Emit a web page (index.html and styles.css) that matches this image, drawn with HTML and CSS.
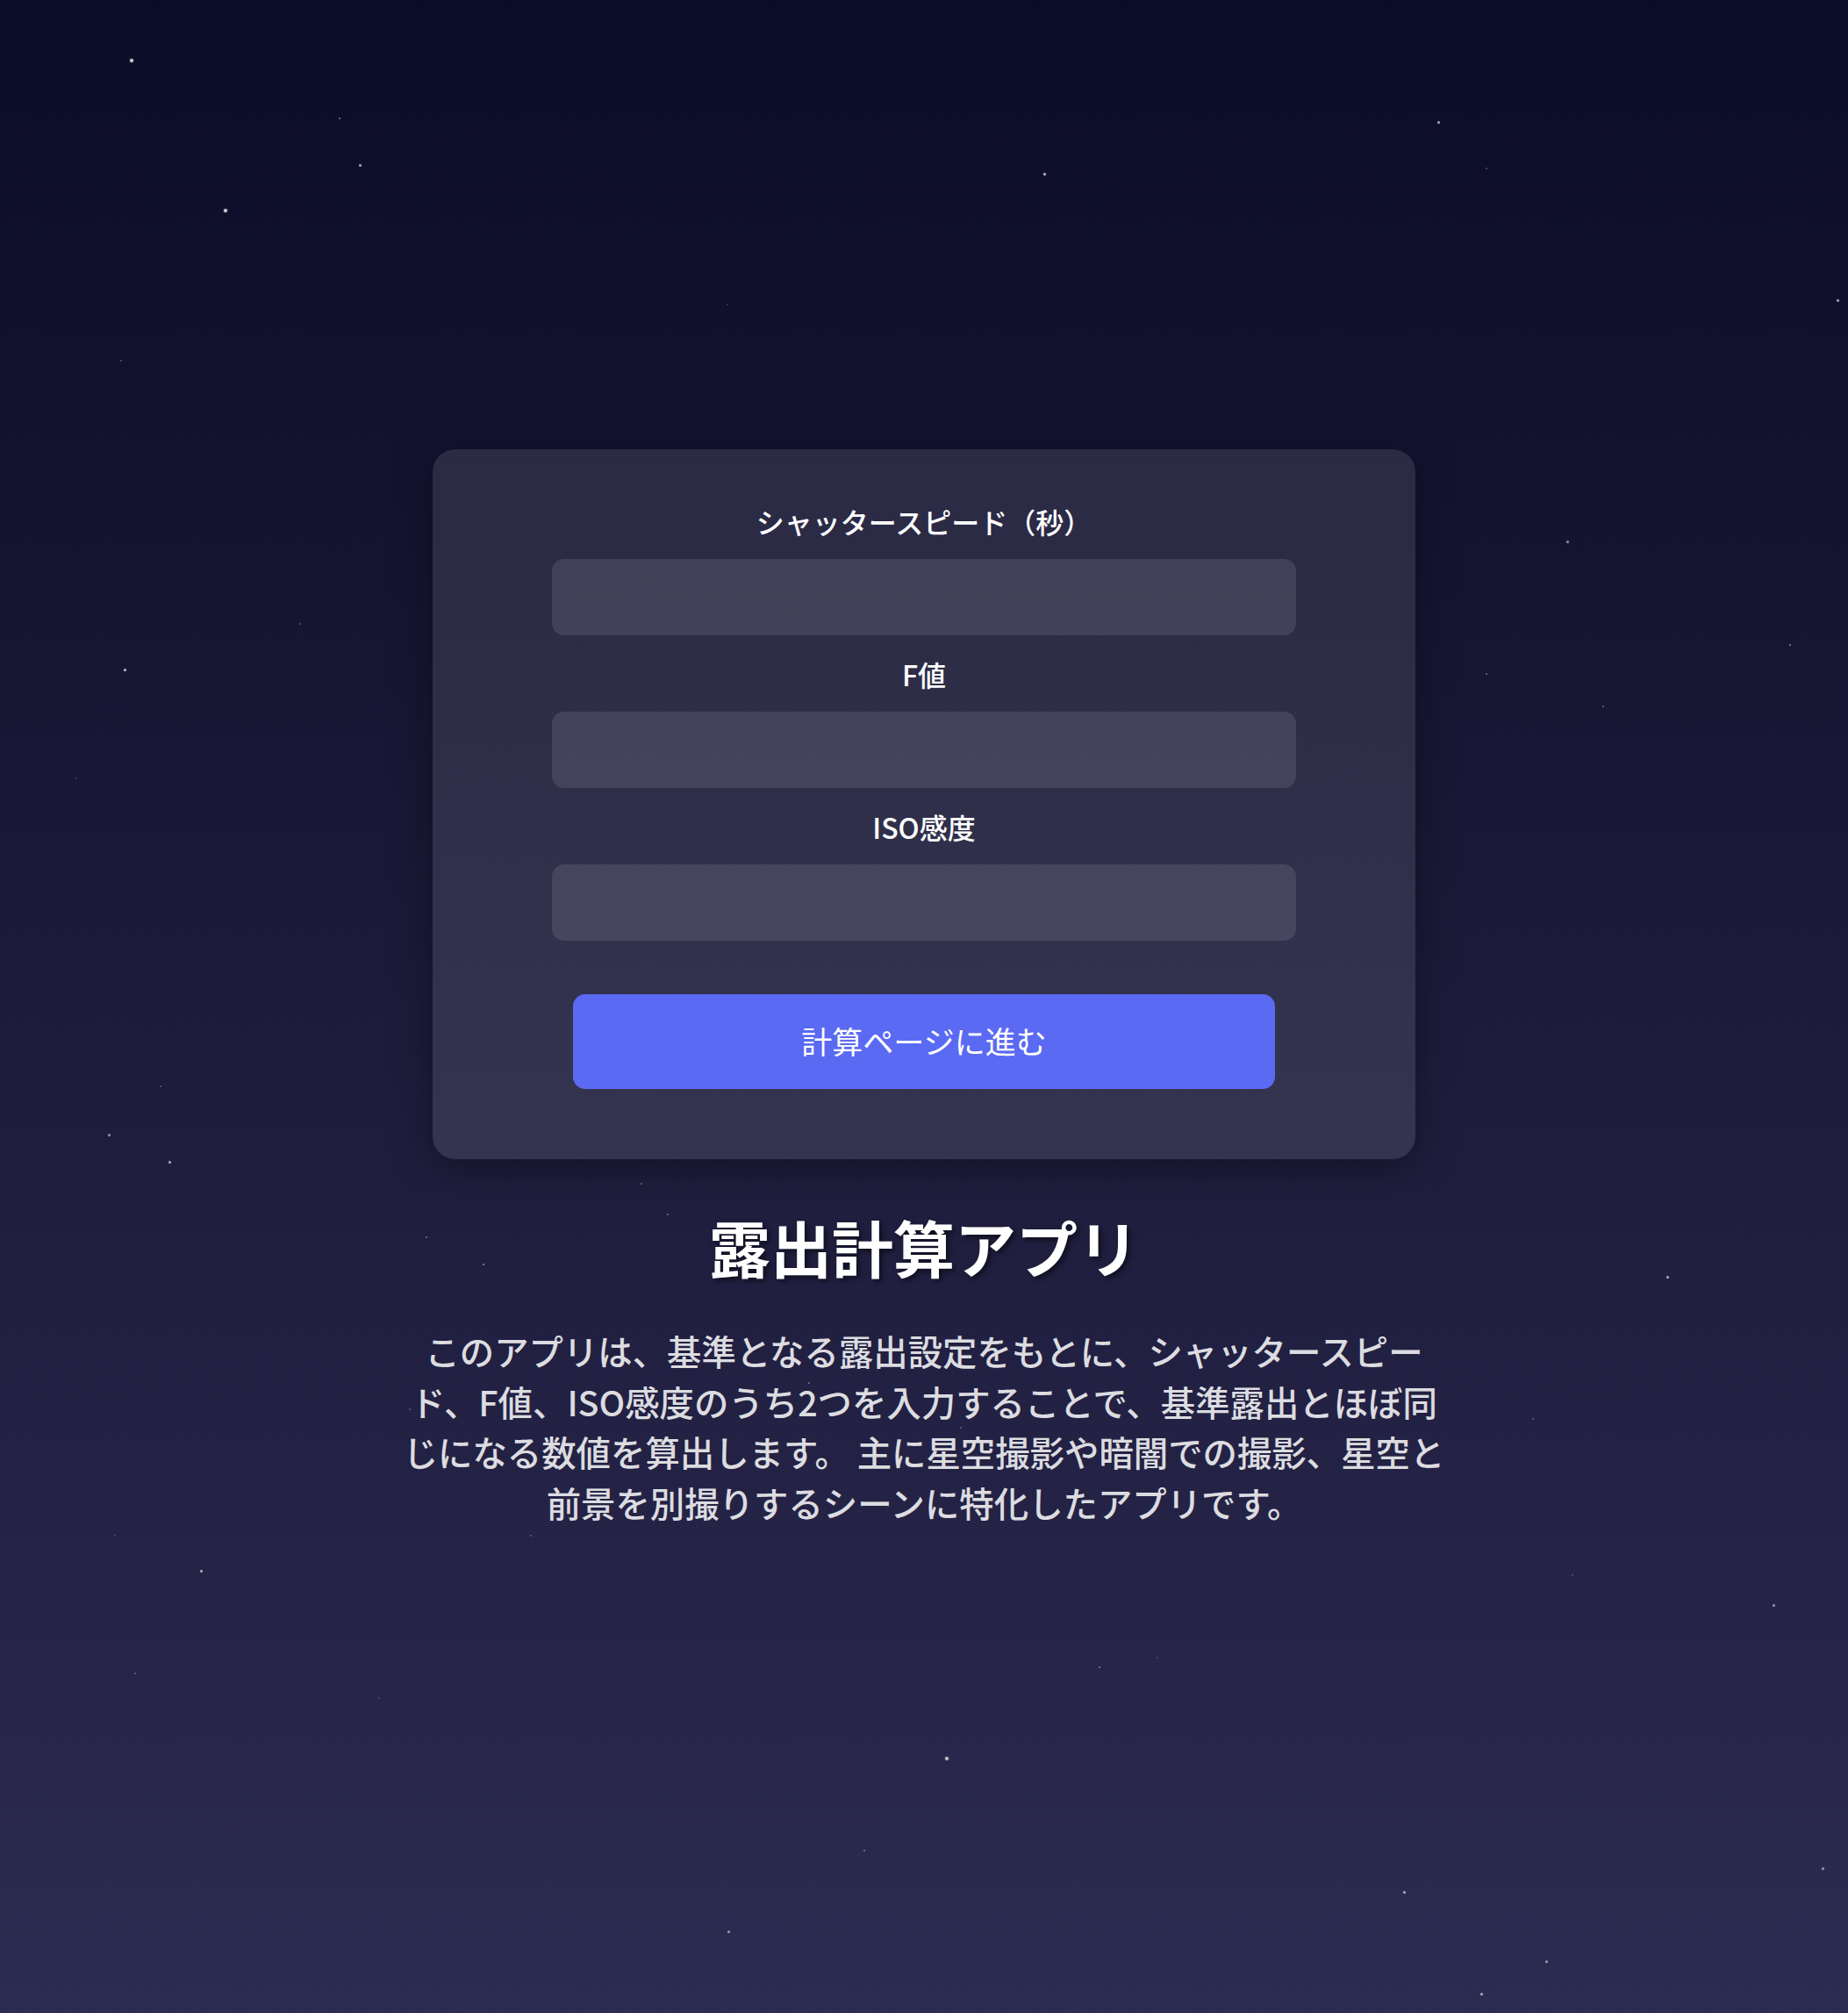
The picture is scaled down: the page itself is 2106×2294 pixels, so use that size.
FILE: index.html
```html
<!DOCTYPE html>
<html lang="ja">
<head>
<meta charset="utf-8">
<title>露出計算アプリ</title>
<link rel="stylesheet" href="styles.css">
</head>
<body>
<div class="sky" aria-hidden="true">
  <span class="star s4" style="left:148px;top:67px;opacity:.8"></span>
  <span class="star s2" style="left:386px;top:134px;opacity:.5"></span>
  <span class="star s3" style="left:409px;top:187px;opacity:.6"></span>
  <span class="star s4" style="left:255px;top:238px;opacity:.8"></span>
  <span class="star s2" style="left:137px;top:410px;opacity:.3"></span>
  <span class="star s2" style="left:828px;top:346px;opacity:.2"></span>
  <span class="star s2" style="left:341px;top:710px;opacity:.3"></span>
  <span class="star s3" style="left:141px;top:762px;opacity:.7"></span>
  <span class="star s3" style="left:1638px;top:138px;opacity:.6"></span>
  <span class="star s2" style="left:1693px;top:191px;opacity:.3"></span>
  <span class="star s3" style="left:1189px;top:197px;opacity:.7"></span>
  <span class="star s3" style="left:2093px;top:341px;opacity:.6"></span>
  <span class="star s3" style="left:1785px;top:616px;opacity:.5"></span>
  <span class="star s2" style="left:2039px;top:734px;opacity:.5"></span>
  <span class="star s2" style="left:1693px;top:767px;opacity:.4"></span>
  <span class="star s2" style="left:1826px;top:804px;opacity:.4"></span>
  <span class="star s2" style="left:86px;top:886px;opacity:.2"></span>
  <span class="star s2" style="left:182px;top:1237px;opacity:.3"></span>
  <span class="star s3" style="left:123px;top:1292px;opacity:.5"></span>
  <span class="star s3" style="left:192px;top:1323px;opacity:.6"></span>
  <span class="star s2" style="left:730px;top:1348px;opacity:.4"></span>
  <span class="star s2" style="left:760px;top:1383px;opacity:.4"></span>
  <span class="star s2" style="left:485px;top:1409px;opacity:.4"></span>
  <span class="star s2" style="left:550px;top:1440px;opacity:.5"></span>
  <span class="star s3" style="left:1899px;top:1454px;opacity:.6"></span>
  <span class="star s2" style="left:921px;top:1575px;opacity:.4"></span>
  <span class="star s2" style="left:1094px;top:1626px;opacity:.3"></span>
  <span class="star s2" style="left:466px;top:1605px;opacity:.3"></span>
  <span class="star s2" style="left:604px;top:1749px;opacity:.3"></span>
  <span class="star s2" style="left:130px;top:1749px;opacity:.2"></span>
  <span class="star s3" style="left:228px;top:1789px;opacity:.6"></span>
  <span class="star s2" style="left:153px;top:1906px;opacity:.3"></span>
  <span class="star s2" style="left:431px;top:1934px;opacity:.2"></span>
  <span class="star s2" style="left:984px;top:2108px;opacity:.4"></span>
  <span class="star s3" style="left:829px;top:2200px;opacity:.5"></span>
  <span class="star s2" style="left:1746px;top:1616px;opacity:.3"></span>
  <span class="star s2" style="left:1791px;top:1794px;opacity:.2"></span>
  <span class="star s3" style="left:2020px;top:1828px;opacity:.5"></span>
  <span class="star s2" style="left:1318px;top:1888px;opacity:.2"></span>
  <span class="star s2" style="left:1252px;top:1899px;opacity:.4"></span>
  <span class="star s4" style="left:1077px;top:2002px;opacity:.7"></span>
  <span class="star s3" style="left:2076px;top:2128px;opacity:.5"></span>
  <span class="star s3" style="left:1599px;top:2155px;opacity:.6"></span>
  <span class="star s3" style="left:1761px;top:2234px;opacity:.5"></span>
  <span class="star s3" style="left:1687px;top:2271px;opacity:.6"></span>
</div>

<main class="page">
  <form class="card" onsubmit="return false;">
    <div class="field">
      <label class="field-label" for="shutter">シャッタースピード（秒）</label>
      <input class="field-input" id="shutter" type="text">
    </div>
    <div class="field">
      <label class="field-label" for="fvalue">F値</label>
      <input class="field-input" id="fvalue" type="text">
    </div>
    <div class="field">
      <label class="field-label" for="iso">ISO感度</label>
      <input class="field-input" id="iso" type="text">
    </div>
    <button class="submit" type="submit">計算ページに進む</button>
  </form>

  <h1 class="title">露出計算アプリ</h1>
  <p class="desc">このアプリは、基準となる露出設定をもとに、シャッタースピード、F値、ISO感度のうち2つを入力することで、基準露出とほぼ同じになる数値を算出します。 主に星空撮影や暗闇での撮影、星空と前景を別撮りするシーンに特化したアプリです。</p>
</main>
</body>
</html>
```

FILE: styles.css
```css
* {
  box-sizing: border-box;
}

html, body {
  margin: 0;
  padding: 0;
}

body {
  min-height: 100vh;
  position: relative;
  overflow: hidden;
  font-family: "Noto Sans CJK JP", "Noto Sans", sans-serif;
  color: #ffffff;
  background: linear-gradient(to bottom, #0b0c27 0%, #1c1b3a 50%, #2c2b51 100%);
}

.sky {
  position: absolute;
  inset: 0;
  pointer-events: none;
}

.star {
  position: absolute;
  display: block;
  border-radius: 50%;
  background: #ffffff;
}

.s2 {
  width: 2px;
  height: 2px;
}

.s3 {
  width: 3px;
  height: 3px;
  box-shadow: 0 0 1px rgba(255, 255, 255, 0.6);
}

.s4 {
  width: 4px;
  height: 4px;
  box-shadow: 0 0 2px rgba(255, 255, 255, 0.6);
}

.page {
  position: relative;
  display: flex;
  flex-direction: column;
  align-items: center;
  padding-top: 512px;
  padding-bottom: 100px;
}

.card {
  width: 1120px;
  padding: 60px 136px 80px;
  border-radius: 26px;
  background: rgba(255, 255, 255, 0.1);
  box-shadow: 0 12px 48px rgba(0, 0, 0, 0.35);
  display: flex;
  flex-direction: column;
}

.field + .field {
  margin-top: 22px;
}

.field-label {
  display: block;
  text-align: center;
  font-size: 32px;
  line-height: 44px;
  font-weight: 500;
  margin-bottom: 21px;
  color: #ffffff;
}

.field-input {
  display: block;
  width: 100%;
  height: 87px;
  border: none;
  outline: none;
  border-radius: 14px;
  background: rgba(255, 255, 255, 0.1);
  color: #ffffff;
  font-family: inherit;
  font-size: 31px;
  padding: 0 24px;
}

.submit {
  align-self: center;
  width: 800px;
  height: 108px;
  margin-top: 61px;
  padding: 0 0 4px;
  border: none;
  border-radius: 14px;
  background: #5a6af3;
  color: #ffffff;
  font-family: inherit;
  font-size: 35px;
  font-weight: 400;
  cursor: pointer;
}

.title {
  margin: 48px 0 0;
  font-size: 70px;
  line-height: 104px;
  font-weight: 700;
  color: #ffffff;
  text-shadow: 3px 3px 6px rgba(0, 0, 0, 0.55);
}

.desc {
  margin: 37px 0 0;
  width: 1200px;
  text-align: center;
  font-size: 39.4px;
  line-height: 57.6px;
  font-weight: 500;
  color: rgba(255, 255, 255, 0.85);
}
```
